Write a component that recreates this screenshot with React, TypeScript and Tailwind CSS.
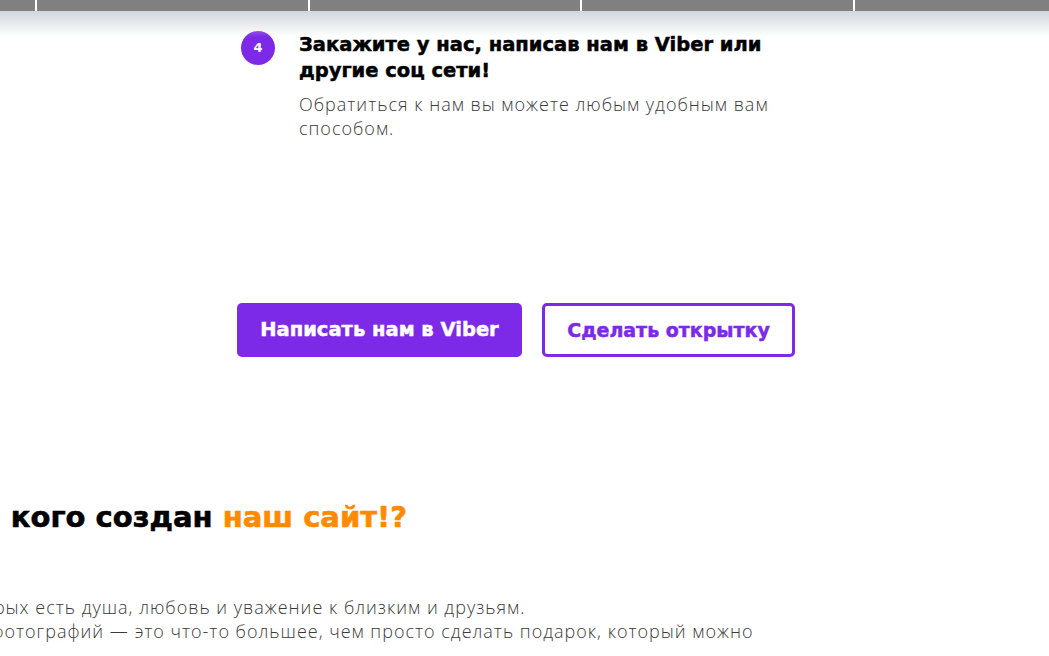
const heading = { fontFamily: '"DejaVu Sans", "Liberation Sans", sans-serif' };
const body = { fontFamily: '"Open Sans", "Noto Sans", sans-serif' };

const TopBar = () => (
  <div className="relative h-[11px] bg-[#808080] flex">
    <div className="w-[37px] border-r-2 border-white" />
    <div className="w-[273px] border-r-2 border-white" />
    <div className="w-[272px] border-r-2 border-white" />
    <div className="w-[273px] border-r-2 border-white" />
    <div className="flex-1" />
    <div className="absolute left-0 right-0 top-[11px] h-[26px] bg-gradient-to-b from-[#d2d7dc] to-white/0" />
  </div>
);

const Step = () => (
  <div className="flex ml-[241px] mt-[20px] gap-[24px]">
    <div className="w-[34px] h-[34px] rounded-full bg-[#7c2ae8] flex items-center justify-center text-white text-[13px] font-bold shrink-0" style={heading}>
      4
    </div>
    <div className="w-[520px]">
      <h3 className="text-[19.5px] leading-[26px] font-bold text-black mt-[1px] [-webkit-text-stroke:0.5px_black]" style={heading}>
        Закажите у нас, написав нам в Viber или другие соц сети!
      </h3>
      <p className="mt-[8px] text-[18px] leading-[24px] tracking-[1px] text-[#3a3a3a] font-light" style={body}>
        Обратиться к нам вы можете любым удобным вам способом.
      </p>
    </div>
  </div>
);

const Buttons = () => (
  <div className="flex ml-[237px] mt-[163px] gap-[20px]">
    <button className="w-[285px] h-[54px] rounded-[5px] bg-[#7c2ae8] text-white text-[19.5px] font-bold [-webkit-text-stroke:0.5px_white]" style={heading}>
      Написать нам в Viber
    </button>
    <button className="w-[253px] h-[54px] rounded-[5px] border-[3px] border-[#7c2ae8] text-[#7c2ae8] bg-white text-[19px] font-bold [-webkit-text-stroke:0.5px_#7c2ae8]" style={heading}>
      Сделать открытку
    </button>
  </div>
);

const About = () => (
  <div className="ml-[-65px] mt-[143px] w-[1200px]">
    <h2 className="text-[29px] leading-[34px] font-bold text-black whitespace-nowrap [-webkit-text-stroke:0.6px_black]" style={heading}>
      Для кого создан <span className="text-[#ff8a00] [-webkit-text-stroke:0.6px_#ff8a00]">наш сайт!?</span>
    </h2>
    <p className="mt-[61px] ml-[-129px] indent-[-14px] text-[18px] leading-[24px] tracking-[1px] text-[#3a3a3a] font-light whitespace-nowrap" style={body}>
      Для тех людей, у которых есть душа, любовь и уважение к близким и друзьям.
      <br />
      Открытка из ваших фотографий — это что-то большее, чем просто сделать подарок, который можно
    </p>
  </div>
);

export default function App() {
  return (
    <div className="w-[1049px] h-[656px] overflow-hidden bg-white">
      <TopBar />
      <Step />
      <Buttons />
      <About />
    </div>
  );
}
